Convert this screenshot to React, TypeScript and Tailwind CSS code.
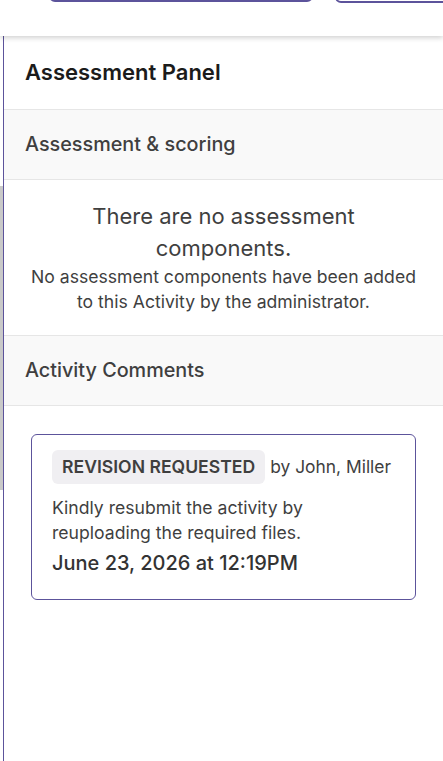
import React from 'react';

const font = { fontFamily: 'Inter, "Noto Sans", sans-serif' };

function TopBar() {
  return (
    <div className="relative z-10 h-9 overflow-hidden bg-white shadow-[0_2px_5px_rgba(0,0,0,0.18)]">
      <div className="flex items-start">
        <div className="ml-[49px] mt-[-38px] h-10 w-[264px] shrink-0 rounded-md border-2 border-[#5c539b] bg-white" />
        <div className="ml-[22px] mt-[-37px] h-10 w-[120px] shrink-0 rounded-md border-2 border-[#5c539b] bg-white" />
      </div>
    </div>
  );
}

function SectionHeader({ title }: { title: string }) {
  return (
    <div className="flex h-[70px] items-center border-b border-[#e6e6e6] bg-[#f9f9f9] px-[21px]">
      <span className="text-[19.8px] font-medium text-[#3f3f3f]">{title}</span>
    </div>
  );
}

export default function App() {
  return (
    <div className="h-[761px] w-[443px] overflow-hidden bg-white" style={font}>
      <TopBar />
      <div className="flex h-[725px]">
        {/* scroll strip behind the panel */}
        <div className="w-[3px] shrink-0">
          <div className="mt-[150px] h-[304px] bg-[#c9c9c9]" />
        </div>
        <div className="flex-1 border-l border-[#5c539b] bg-white">
          <div className="flex h-[74px] items-center border-b border-[#e6e6e6] px-[21px]">
            <h1 className="text-[22px] font-semibold text-[#1b1b1b]">Assessment Panel</h1>
          </div>

          <SectionHeader title="Assessment & scoring" />

          <div className="border-b border-[#e6e6e6] px-6 pt-[20px] pb-[21px] text-center text-[#3f3f3f]">
            <p className="text-[22px] leading-[32px]">There are no assessment components.</p>
            <p className="text-[17.6px] leading-[25px]">
              No assessment components have been added to this Activity by the administrator.
            </p>
          </div>

          <SectionHeader title="Activity Comments" />

          <div className="px-[27px] pt-[28px]">
            <div className="rounded-md border border-[#5c539b] px-5 pt-[15px] pb-[22px]">
              <div className="flex items-center gap-[5px]">
                <span className="rounded-md bg-[#f0eff2] px-[10px] py-[6px] text-[17.6px] font-semibold leading-[22px] text-[#3f3f3f]">
                  REVISION REQUESTED
                </span>
                <span className="text-[17.4px] text-[#3f3f3f]">by John, Miller</span>
              </div>
              <p className="mt-[11px] text-[17.6px] leading-[25px] text-[#3f3f3f]">
                Kindly resubmit the activity by reuploading the required files.
              </p>
              <p className="mt-[4px] text-[20px] font-medium leading-[28px] text-[#333]">
                June 23, 2026 at 12:19PM
              </p>
            </div>
          </div>
        </div>
      </div>
    </div>
  );
}
